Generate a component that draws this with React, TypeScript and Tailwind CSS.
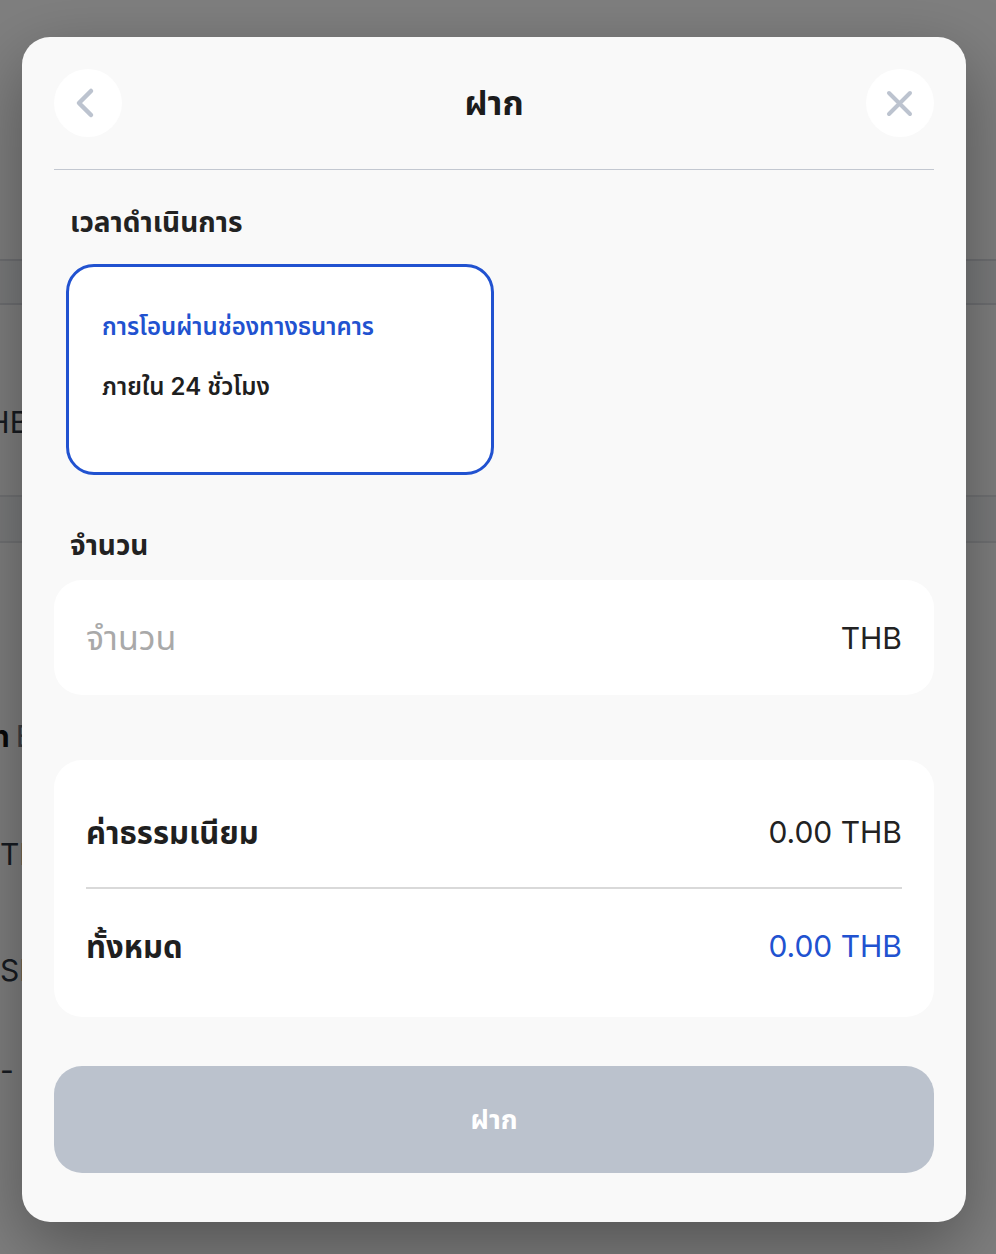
import React from "react";

const FONT = { fontFamily: "Inter, 'Noto Sans Thai', 'Noto Sans Thai Looped', 'Noto Sans', sans-serif" };

function BackgroundPage() {
  return (
    <div className="w-full h-full bg-[#f3f4f6] flex flex-col text-[#2f3742]">
      <div className="h-[259px] bg-white" />
      <div className="h-[46px] border-y-2 border-[#dcdfe4] bg-[#f5f6f8]" />
      <div className="h-[192px] border-b-2 border-[#e2e4e8] bg-white flex items-center pt-[44px]">
        <span className="text-[30px] leading-none -ml-[32px]">THB</span>
      </div>
      <div className="h-[46px] border-b-2 border-[#e2e4e8] bg-[#f5f6f8]" />
      <div className="flex flex-col bg-white flex-1 pt-[178px]">
        <div className="flex items-center gap-[6px] text-[30px] leading-none -ml-[9px]">
          <span className="font-bold text-[#111]">n</span>
          <span className="text-[#777c85]">E</span>
        </div>
        <span className="text-[30px] leading-none mt-[88px]">TH</span>
        <span className="text-[30px] leading-none mt-[86px]">SD</span>
        <span className="text-[30px] leading-none mt-[70px]">-</span>
      </div>
    </div>
  );
}

function ChevronLeft() {
  return (
    <svg width="24" height="32" viewBox="0 0 24 32" fill="none" className="-ml-[3px]">
      <path d="M16 4L4 16l12 12" stroke="#bcc3cf" strokeWidth="4.5" strokeLinecap="round" strokeLinejoin="round" />
    </svg>
  );
}

function CloseIcon() {
  return (
    <svg width="29" height="29" viewBox="0 0 29 29" fill="none">
      <path d="M4 4l21 21M25 4L4 25" stroke="#bcc3cf" strokeWidth="4" strokeLinecap="round" />
    </svg>
  );
}

export default function App() {
  return (
    <div className="relative w-[996px] h-[1254px] overflow-hidden" style={FONT}>
      <BackgroundPage />
      <div className="absolute inset-0 bg-black/50">
        <div className="ml-[22px] mt-[37px] w-[944px] h-[1185px] rounded-[28px] bg-[#f9f9f9] shadow-[0_24px_70px_rgba(0,0,0,0.35)] px-8 pt-8 pb-[49px] flex flex-col">
          <div className="flex items-center justify-between h-[68px]">
            <button className="w-[68px] h-[68px] rounded-full bg-white flex items-center justify-center">
              <ChevronLeft />
            </button>
            <h1 className="text-[34px] font-bold text-[#1c1c1c] leading-none">ฝาก</h1>
            <button className="w-[68px] h-[68px] rounded-full bg-white flex items-center justify-center">
              <CloseIcon />
            </button>
          </div>
          <div className="mt-8 h-px bg-[#c3c8d1]" />

          <div className="pt-[36px] px-4 text-[28px] leading-8 font-bold text-[#222]">เวลาดำเนินการ</div>

          <div className="mt-[26px] ml-3 w-[428px] h-[211px] rounded-[28px] border-[3px] border-[#2152d0] bg-white pt-[46px] px-[33px] flex flex-col">
            <div className="text-[24px] leading-7 font-semibold text-[#2152d0]">การโอนผ่านช่องทางธนาคาร</div>
            <div className="mt-8 text-[24px] leading-7 font-semibold text-[#1f1f1f]">ภายใน 24 ชั่วโมง</div>
          </div>

          <div className="mt-[54px] px-4 text-[28px] leading-8 font-bold text-[#222]">จำนวน</div>

          <div className="mt-[19px] h-[115px] rounded-[28px] bg-white px-8 flex items-center justify-between">
            <span className="text-[34px] leading-none text-[#a9a9a9]">จำนวน</span>
            <span className="text-[30px] leading-none text-[#222]">THB</span>
          </div>

          <div className="mt-[65px] h-[257px] rounded-[28px] bg-white px-8 pt-[48px] flex flex-col">
            <div className="h-12 flex items-center justify-between">
              <span className="text-[31px] leading-none font-bold text-[#1f1f1f]">ค่าธรรมเนียม</span>
              <span className="text-[30px] leading-none text-[#222]">0.00 THB</span>
            </div>
            <div className="mt-[31px] h-[2px] bg-[#d9d9d9]" />
            <div className="mt-[33px] h-12 flex items-center justify-between">
              <span className="text-[31px] leading-none font-bold text-[#1f1f1f]">ทั้งหมด</span>
              <span className="text-[30px] leading-none text-[#2152d0]">0.00 THB</span>
            </div>
          </div>

          <button className="mt-auto h-[107px] rounded-[28px] bg-[#bbc2cd] flex items-center justify-center text-[27px] leading-none font-bold text-white">
            ฝาก
          </button>
        </div>
      </div>
    </div>
  );
}
